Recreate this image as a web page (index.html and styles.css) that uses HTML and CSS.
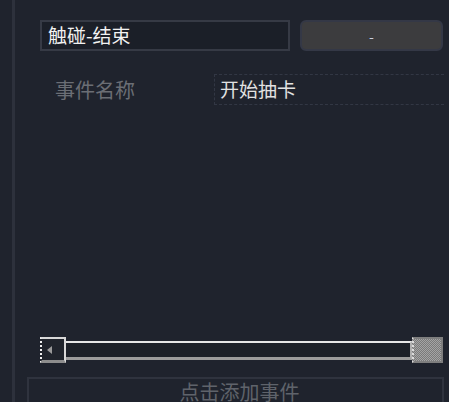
FILE: index.html
```html
<!DOCTYPE html>
<html lang="zh-CN">
<head>
    <meta charset="UTF-8">
    <meta name="viewport" content="width=device-width, initial-scale=1.0">
    <title>事件编辑</title>
    <link rel="stylesheet" href="styles.css">
</head>
<body>
    <div class="rail"></div>
    <div class="panel">
        <div class="top-row">
            <div class="name-field">触碰-结束</div>
            <button class="remove-btn">-</button>
        </div>

        <div class="event-row">
            <span class="event-label">事件名称</span>
            <div class="event-value">开始抽卡</div>
        </div>

        <div class="spacer"></div>

        <div class="scrollbar">
            <div class="scroll-left"><span class="arrow-left"></span></div>
            <div class="scroll-track"></div>
            <div class="scroll-right"></div>
        </div>

        <div class="add-event">点击添加事件</div>
    </div>
</body>
</html>
```

FILE: styles.css
```css
html, body {
    height: 100%;
}

body {
    margin: 0;
    background-color: #1f232d;
    display: flex;
    overflow: hidden;
    font-family: "Noto Sans CJK SC", "Noto Sans", sans-serif;
}

.rail {
    width: 3px;
    margin-left: 12px;
    background-color: #2d313c;
    flex: 0 0 auto;
}

.panel {
    margin-left: 12px;
    width: 417px;
    display: flex;
    flex-direction: column;
}

.top-row {
    display: flex;
    gap: 10px;
    margin-top: 20px;
    padding-left: 13px;
    height: 31px;
}

.name-field {
    box-sizing: border-box;
    width: 250px;
    height: 31px;
    border: 2px solid #363a45;
    background-color: #1b1f28;
    color: #f2f2f2;
    font-size: 19px;
    line-height: 26px;
    padding-left: 6px;
}

.remove-btn {
    box-sizing: border-box;
    width: 143px;
    height: 31px;
    border: 2px solid #343846;
    border-radius: 6px;
    background-color: #3c3c3e;
    color: #c8d0e0;
    font-family: "Noto Sans CJK SC", sans-serif;
    font-size: 14px;
    padding: 0;
}

.event-row {
    display: flex;
    align-items: center;
    margin-top: 23px;
    height: 30px;
}

.event-label {
    width: 187px;
    padding-left: 28px;
    box-sizing: border-box;
    color: #6b6e75;
    font-size: 20px;
}

.event-value {
    box-sizing: border-box;
    width: 230px;
    height: 31px;
    border: 1px dashed #323744;
    border-right: none;
    color: #e2e2e2;
    font-size: 19px;
    line-height: 28px;
    padding-left: 5px;
}

.spacer {
    flex: 1;
}

.scrollbar {
    display: flex;
    align-items: stretch;
    margin-left: 13px;
    width: 403px;
    height: 26px;
    margin-bottom: 14px;
}

.scroll-left {
    box-sizing: border-box;
    width: 26px;
    border: 2px solid #d8d8d8;
    border-left: 2px dotted #f0f0f0;
    border-bottom: 3px solid #8d8d8d;
    background-color: #20242c;
    display: flex;
    align-items: center;
    padding-left: 5px;
}

.arrow-left {
    width: 0;
    height: 0;
    border-top: 4px solid transparent;
    border-bottom: 4px solid transparent;
    border-right: 5px solid #9a9a9a;
}

.scroll-track {
    flex: 1;
    margin: 4px 0 3px;
    border-top: 2px solid #e6e6e6;
    border-bottom: 3px solid #9c9c9c;
    border-right: 2px solid #b0b0b0;
    background-color: #1c2028;
}

.scroll-right {
    box-sizing: border-box;
    width: 31px;
    border: 2px solid #7e7e7e;
    border-left: 2px dotted #dcdcdc;
    background: repeating-conic-gradient(#a4a4a4 0 25%, #7a7a7a 0 50%) 0 0 / 2px 2px;
}

.add-event {
    box-sizing: border-box;
    height: 25px;
    flex: 0 0 auto;
    overflow: hidden;
    border: 2px solid #2f333e;
    border-bottom: none;
    color: #5f636b;
    font-size: 20px;
    text-align: center;
    line-height: 26px;
    padding-left: 8px;
}
```
